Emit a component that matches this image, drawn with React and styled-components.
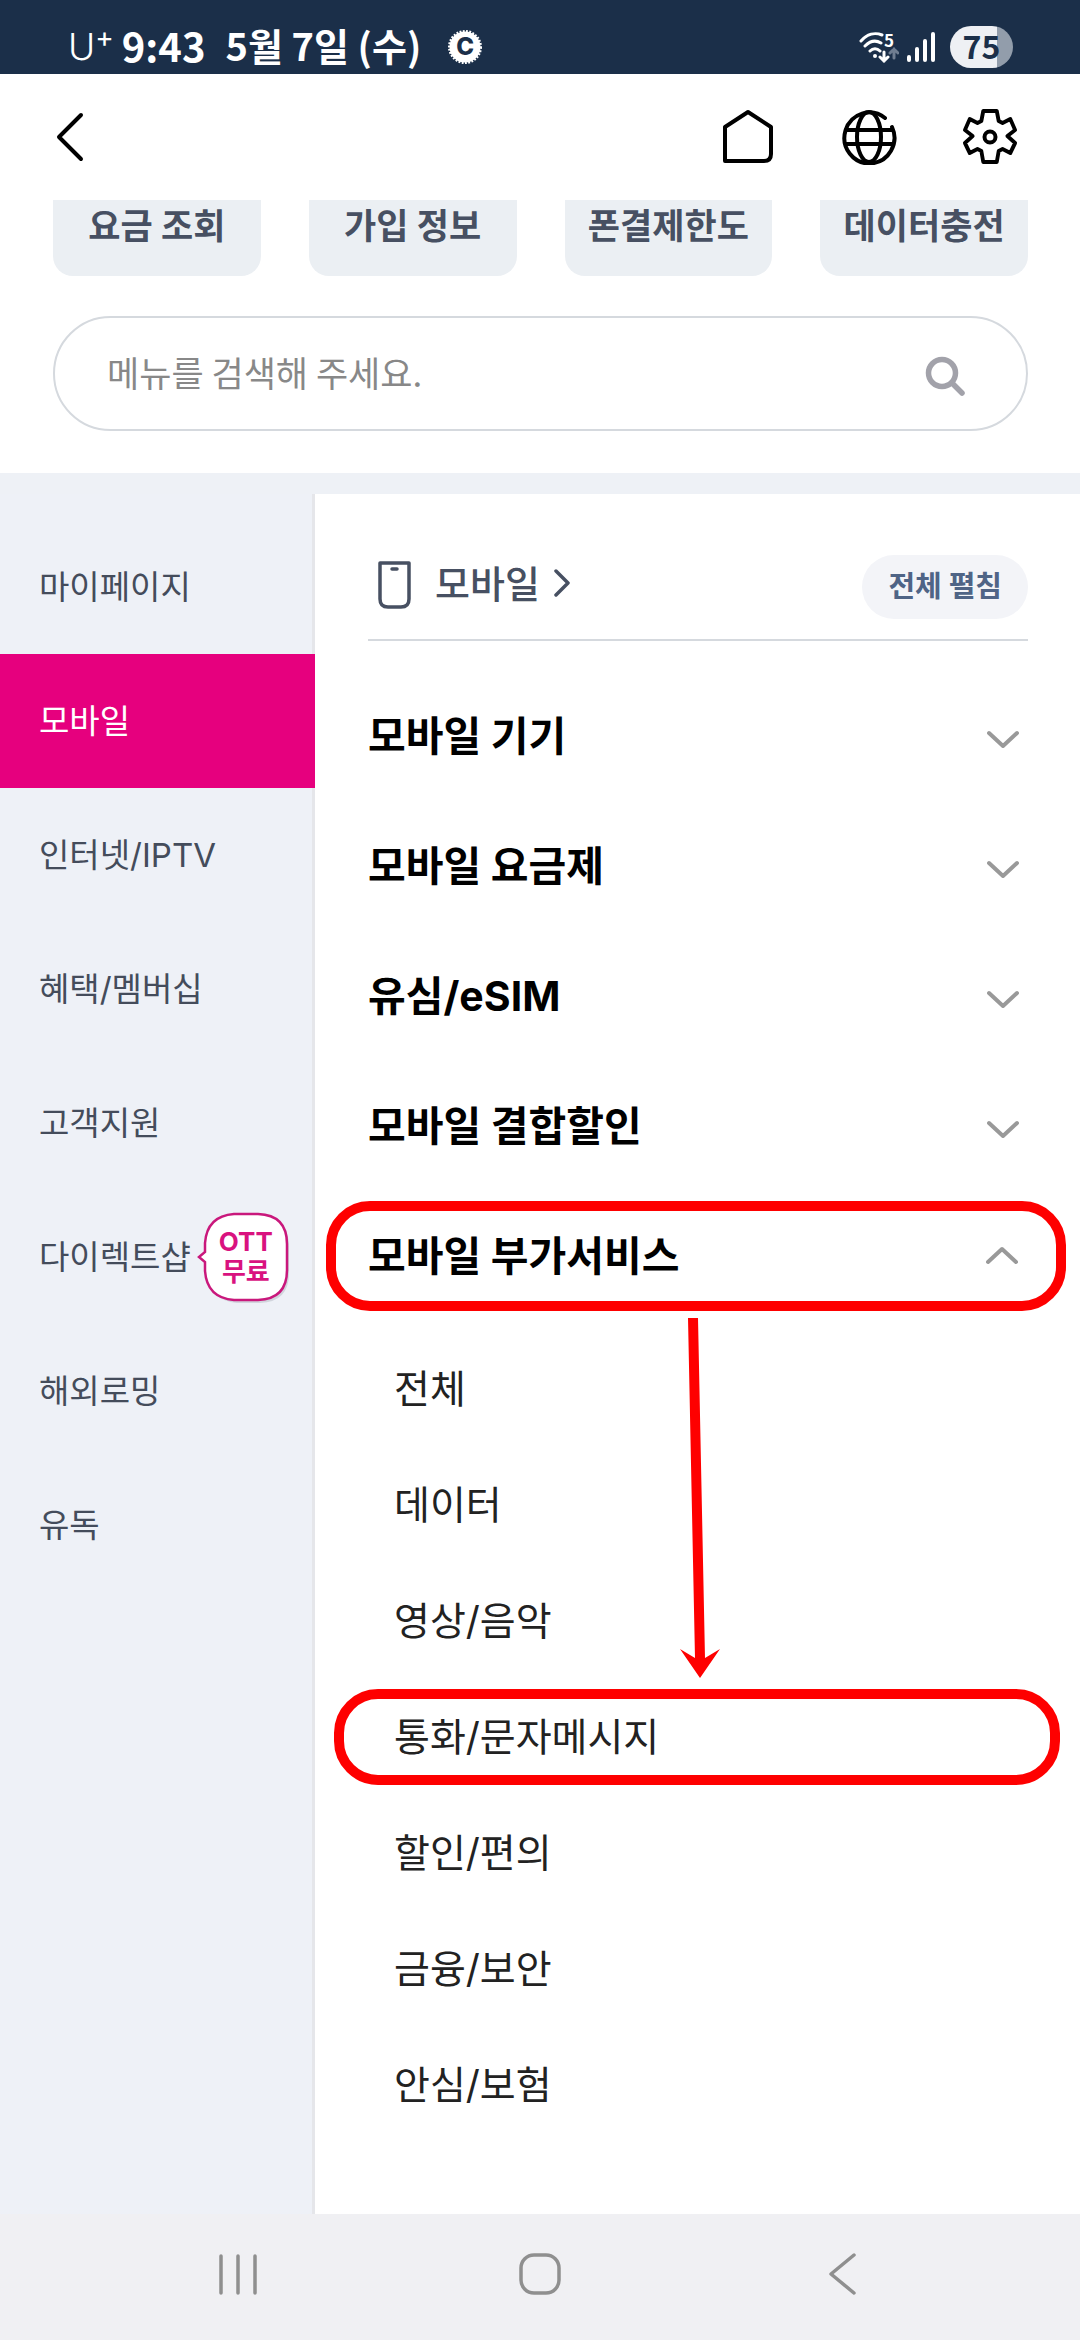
import React from 'react';
import styled, { createGlobalStyle } from 'styled-components';

const korean = '"Noto Sans CJK KR", sans-serif';
const mixed = '"Inter", "Noto Sans CJK KR", sans-serif';

const GlobalStyle = createGlobalStyle`
  *, *::before, *::after { box-sizing: border-box; }
  body { margin: 0; background: #fdfdfd; font-family: ${mixed}; color: #000; }
  button, input { font: inherit; color: inherit; border: 0; padding: 0; background: none; }
  button { cursor: pointer; text-align: left; }
  a { color: inherit; text-decoration: none; }
  ul { list-style: none; margin: 0; padding: 0; }
  h2, h3 { margin: 0; font: inherit; }
  svg { display: block; flex: none; }
`;

const Page = styled.div`
  display: flex;
  flex-direction: column;
  min-height: 100vh;
  background: #fff;
`;

/* status bar */
const StatusBar = styled.div`
  display: flex;
  align-items: flex-end;
  justify-content: space-between;
  height: 74px;
  padding: 0 67px 6px 68px;
  background: #1b2f49;
  color: #fff;
  font-family: ${korean};
`;
const StatusGroup = styled.div`
  display: flex;
  align-items: center;
  height: 42px;
  gap: 8px;
`;
const Carrier = styled.span`
  display: flex;
  font-family: "Inter", sans-serif;
  font-weight: 300;
  font-size: 37px;
  line-height: 42px;
`;
const CarrierPlus = styled.span`
  font-weight: 400;
  font-size: 28px;
  line-height: 22px;
`;
const Clock = styled.span`
  padding-bottom: 4px;
  font-weight: 700;
  font-size: 40px;
  line-height: 42px;
`;
const DateText = styled.span`
  margin-left: 12px;
  padding-bottom: 4px;
  font-weight: 700;
  font-size: 38px;
  line-height: 42px;
`;
const Seal = styled.span`
  display: grid;
  place-items: center;
  margin-left: 19px;
  & > * { grid-area: 1 / 1; }
`;
const SealLetter = styled.span`
  font-family: "Inter", sans-serif;
  font-weight: 800;
  font-size: 24px;
  line-height: 24px;
  color: #1b2f49;
`;
const Wifi = styled.span`
  display: grid;
  & > * { grid-area: 1 / 1; }
`;
const WifiBand = styled.span`
  justify-self: center;
  padding-left: 20px;
  font-weight: 700;
  font-size: 17px;
  line-height: 17px;
`;
const Battery = styled.span`
  width: 63px;
  height: 42px;
  margin-left: 7px;
  border-radius: 21px;
  background: linear-gradient(90deg, #eef0f4 75%, #929dab 75%);
  color: #1b2f49;
  font-weight: 700;
  font-size: 32px;
  line-height: 38px;
  text-align: center;
`;

/* app header */
const Header = styled.header`
  display: flex;
  align-items: center;
  justify-content: space-between;
  height: 126px;
  padding: 0 62px 0 55px;
`;
const HeaderActions = styled.div`
  display: flex;
  gap: 65px;
`;
const IconButton = styled.button`
  display: grid;
  place-items: center;
`;

/* shortcut cards and search */
const Shortcuts = styled.nav`
  display: grid;
  grid-template-columns: repeat(4, 1fr);
  gap: 48px;
  padding: 0 52px 0 53px;
`;
const Shortcut = styled.a`
  padding-bottom: 24px;
  border-radius: 0 0 20px 20px;
  background: #ebeff3;
  color: #475062;
  font-weight: 700;
  font-size: 35px;
  line-height: 52px;
  text-align: center;
  white-space: nowrap;
`;
const SearchForm = styled.form`
  display: flex;
  align-items: center;
  height: 115px;
  margin: 40px 52px 42px 53px;
  padding: 0 59px 0 52px;
  border: 2px solid #d5d9de;
  border-radius: 58px;
`;
const SearchInput = styled.input`
  flex: 1;
  min-width: 0;
  height: 56px;
  padding-bottom: 4px;
  outline: 0;
  font-family: ${korean};
  font-size: 35px;
  &::placeholder { color: #888; opacity: 1; }
`;

/* two-pane menu */
const Body = styled.div`
  display: grid;
  grid-template-columns: 315px 1fr;
  flex: 1;
  border-top: 21px solid #eef1f6;
`;
const Sidebar = styled.nav`
  padding-top: 26px;
  background: #eef1f7;
  box-shadow: inset -3px 0 #e5e6ea;
`;
const SideLink = styled.a`
  display: flex;
  align-items: center;
  height: 134px;
  padding-left: 39px;
  background: ${(p) => (p.$active ? '#e6007e' : 'transparent')};
  color: ${(p) => (p.$active ? '#fff' : '#444c5b')};
  font-size: 33px;
  line-height: 48px;
  white-space: nowrap;
`;
const Bubble = styled.span`
  display: grid;
  margin-left: 7px;
  & > * { grid-area: 1 / 1; }
`;
const BubbleText = styled.span`
  align-self: center;
  padding: 0 6px 0 8px;
  color: #d9127f;
  font-weight: 700;
  font-size: 26px;
  line-height: 30px;
  text-align: center;
`;
const Main = styled.main`
  padding: 61px 52px 12px 53px;
`;
const SectionHead = styled.div`
  display: flex;
  align-items: center;
  justify-content: space-between;
  padding-bottom: 20px;
  border-bottom: 2px solid #d5d9de;
`;
const SectionLink = styled.a`
  display: flex;
  align-items: center;
  padding: 0 0 4px 9px;
  color: #475062;
  font-weight: 500;
  font-size: 38px;
  line-height: 56px;
`;
const SectionName = styled.span`
  padding: 0 12px 2px 24px;
`;
const ExpandButton = styled.button`
  height: 64px;
  padding: 0 26px 6px;
  border-radius: 32px;
  background: #f3f4f8;
  color: #4f6486;
  font-weight: 700;
  font-size: 29px;
`;
const Accordion = styled.ul`
  padding-top: 30px;
`;
const Marked = styled.div`
  position: relative;
`;
const GroupButton = styled.button`
  display: flex;
  align-items: center;
  justify-content: space-between;
  width: 100%;
  height: 130px;
  padding-right: 8px;
  font-weight: 700;
  font-size: 41px;
  line-height: 60px;
`;
const SubList = styled.ul`
  position: relative;
  padding-top: 10px;
`;
const SubLink = styled.a`
  display: flex;
  align-items: center;
  height: 116px;
  padding-left: 26px;
  color: #222;
  font-size: 39px;
  line-height: 56px;
`;

/* hand-drawn guide marks over the menu */
const Outline = styled.span`
  position: absolute;
  inset: 10px ${(p) => -p.$right}px 10px ${(p) => -p.$left}px;
  border: 10px solid #fe0000;
  border-radius: 44px;
  pointer-events: none;
`;
const Arrow = styled.svg`
  position: absolute;
  top: -3px;
  left: 312px;
  pointer-events: none;
`;

/* system navigation */
const SystemNav = styled.nav`
  display: grid;
  grid-template-columns: repeat(3, 1fr);
  height: 126px;
  padding: 0 87px 6px;
  background: #f0f0f3;
`;

const Chevron = ({ open }) => (
  <svg width="34" height="24" viewBox="0 0 34 24" fill="none" stroke="#999" strokeWidth="4" strokeLinecap="round" strokeLinejoin="round">
    <path d={open ? 'M2 18 16 5l14 13' : 'M3 9l14 13L31 9'} />
  </svg>
);

const CarrierSeal = () => (
  <Seal>
    <svg width="34" height="34" viewBox="0 0 34 34" fill="#fff">
      <circle cx="17" cy="17" r="15.5" />
      <circle cx="17" cy="17" r="15.5" fill="none" stroke="#fff" strokeWidth="3" strokeDasharray="1.8 1.4" />
    </svg>
    <SealLetter>C</SealLetter>
  </Seal>
);

const shortcuts = ['요금 조회', '가입 정보', '폰결제한도', '데이터충전'];
const sections = ['마이페이지', '모바일', '인터넷/IPTV', '혜택/멤버십', '고객지원', '다이렉트샵', '해외로밍', '유독'];
const groups = ['모바일 기기', '모바일 요금제', '유심/eSIM', '모바일 결합할인', '모바일 부가서비스'];
const services = ['전체', '데이터', '영상/음악', '통화/문자메시지', '할인/편의', '금융/보안', '안심/보험'];

export default function App() {
  return (
    <Page>
      <GlobalStyle />
      <StatusBar>
        <StatusGroup>
          <Carrier>U<CarrierPlus>+</CarrierPlus></Carrier>
          <Clock>9:43</Clock>
          <DateText>5월 7일 (수)</DateText>
          <CarrierSeal />
        </StatusGroup>
        <StatusGroup>
          <Wifi>
            <svg width="40" height="32" viewBox="0 0 40 32" fill="none" stroke="#fff" strokeWidth="3" strokeLinecap="round">
              <path d="M2 10C8 3 16 1 23 4M6 15c5-5 11-6 16-3M11 20c3-3 7-3 10 0" />
              <circle cx="16" cy="25" r="2" fill="#fff" stroke="none" />
              <path d="M25 21v9m-4-4 4 4 4-4" />
              <path d="M35 27v-9m-4 4 4-4 4 4" stroke="#6f7d90" />
            </svg>
            <WifiBand>5</WifiBand>
          </Wifi>
          <svg width="28" height="32" viewBox="0 0 28 32" stroke="#fff" strokeWidth="4" strokeLinecap="round">
            <path d="M2 26v3M10 18v11M18 10v19M26 3v26" />
          </svg>
          <Battery>75</Battery>
        </StatusGroup>
      </StatusBar>

      <Header>
        <IconButton type="button" aria-label="뒤로">
          <svg width="30" height="50" viewBox="0 0 30 50" fill="none" stroke="#000" strokeWidth="4" strokeLinecap="round" strokeLinejoin="round">
            <path d="M26 3 4 25l22 22" />
          </svg>
        </IconButton>
        <HeaderActions>
          <IconButton type="button" aria-label="홈">
            <svg width="56" height="56" viewBox="0 0 56 56" fill="none" stroke="#000" strokeWidth="4" strokeLinejoin="round">
              <path d="M28 3 51 18v27q0 7-7 7H5V18Z" />
            </svg>
          </IconButton>
          <IconButton type="button" aria-label="언어">
            <svg width="56" height="56" viewBox="0 0 56 56" fill="none" stroke="#000" strokeWidth="4" strokeLinecap="round">
              <path d="M44 9A25 25.500 0 1 0 51 18" />
              <ellipse cx="28" cy="28" rx="12" ry="25" />
              <path d="M5 21h46M5 35h46" />
            </svg>
          </IconButton>
          <IconButton type="button" aria-label="설정">
            <svg width="56" height="56" viewBox="0 0 56 56" fill="none" stroke="#000" strokeWidth="4" strokeLinejoin="round">
              <path d="M21 2h14l2 10 4 2 8-4 5 11-8 6 8 7-5 10-8-4-4 2-2 11H21l-2-11-4-2-8 4-5-10 8-7-8-6L7 10l8 4 4-2Z" transform="translate(1 0) scale(.965 1)" />
              <circle cx="28" cy="28" r="5.500" />
            </svg>
          </IconButton>
        </HeaderActions>
      </Header>

      <Shortcuts>
        {shortcuts.map((s) => <Shortcut key={s} href="#">{s}</Shortcut>)}
      </Shortcuts>
      <SearchForm role="search" onSubmit={(e) => e.preventDefault()}>
        <SearchInput type="text" aria-label="메뉴 검색" placeholder="메뉴를 검색해 주세요." />
        <IconButton type="submit" aria-label="검색">
          <svg width="44" height="38" viewBox="0 0 44 38" fill="none" stroke="#a2a2aa" strokeWidth="5.500" strokeLinecap="round" overflow="visible">
            <circle cx="19" cy="18" r="13.500" />
            <path d="M29 28l10 10" />
          </svg>
        </IconButton>
      </SearchForm>

      <Body>
        <Sidebar>
          {sections.map((name) => (
            <SideLink key={name} href="#" $active={name === '모바일'}>
              {name}
              {name === '다이렉트샵' && (
                <Bubble>
                  <svg width="94" height="92" viewBox="0 0 94 92" overflow="visible">
                    <path d="M38 3h22q29 1 29 30v26q0 29-29 30H37Q10 87 8 60v-9L1 46l7-5v-9Q10 5 38 3Z" fill="#9aa0ac" opacity=".35" transform="translate(2 3)" />
                    <path d="M36 3h24q29 1 29 30v26q0 29-29 30H36Q9 87 7 60v-9L1 46l6-5v-9Q9 5 36 3Z" fill="#fff" stroke="#c9187c" strokeWidth="2.500" />
                  </svg>
                  <BubbleText>OTT<br />무료</BubbleText>
                </Bubble>
              )}
            </SideLink>
          ))}
        </Sidebar>

        <Main>
          <SectionHead>
            <h2>
              <SectionLink href="#">
                <svg width="34" height="50" viewBox="0 0 34 50" fill="none" stroke="#475062" strokeWidth="3.500" strokeLinejoin="round">
                  <path d="M3 3h29v36q0 8-8 8H11q-8 0-8-8Z" />
                  <path d="M15 9h5" strokeLinecap="round" />
                </svg>
                <SectionName>모바일</SectionName>
                <svg width="20" height="32" viewBox="0 0 20 32" fill="none" stroke="#475062" strokeWidth="3.500" strokeLinecap="round" strokeLinejoin="round">
                  <path d="M4 2l12 12L4 26" />
                </svg>
              </SectionLink>
            </h2>
            <ExpandButton type="button">전체 펼침</ExpandButton>
          </SectionHead>

          <Accordion>
            {groups.map((name) => {
              const open = name === '모바일 부가서비스';
              return (
                <li key={name}>
                  <Marked>
                    <GroupButton type="button" aria-expanded={open}>
                      {name}
                      <Chevron open={open} />
                    </GroupButton>
                    {open && <Outline $left={42} $right={38} />}
                  </Marked>
                  {open && (
                    <SubList>
                      {services.map((s) => (
                        <li key={s}>
                          <Marked>
                            <SubLink href="#">{s}</SubLink>
                            {s === '통화/문자메시지' && <Outline $left={34} $right={32} />}
                          </Marked>
                        </li>
                      ))}
                      <Arrow width="40" height="360" viewBox="0 0 40 360" fill="#fe0000" aria-hidden="true">
                        <path d="M8 0h10l7 340 15-9-20 29L0 331l15 9Z" />
                      </Arrow>
                    </SubList>
                  )}
                </li>
              );
            })}
          </Accordion>
        </Main>
      </Body>

      <SystemNav>
        <IconButton type="button" aria-label="최근 앱">
          <svg width="40" height="44" viewBox="0 0 40 44" stroke="#8f8f8f" strokeWidth="3.500" strokeLinecap="round">
            <path d="M3 4v37M20 4v37M37 4v37" />
          </svg>
        </IconButton>
        <IconButton type="button" aria-label="홈 화면">
          <svg width="44" height="44" viewBox="0 0 44 44" fill="none" stroke="#8f8f8f" strokeWidth="3.500">
            <rect x="3" y="3" width="38" height="38" rx="13" />
          </svg>
        </IconButton>
        <IconButton type="button" aria-label="이전">
          <svg width="30" height="44" viewBox="0 0 30 44" fill="none" stroke="#8f8f8f" strokeWidth="3.500" strokeLinecap="round" strokeLinejoin="round">
            <path d="M27 3 4 22l23 19" />
          </svg>
        </IconButton>
      </SystemNav>
    </Page>
  );
}
